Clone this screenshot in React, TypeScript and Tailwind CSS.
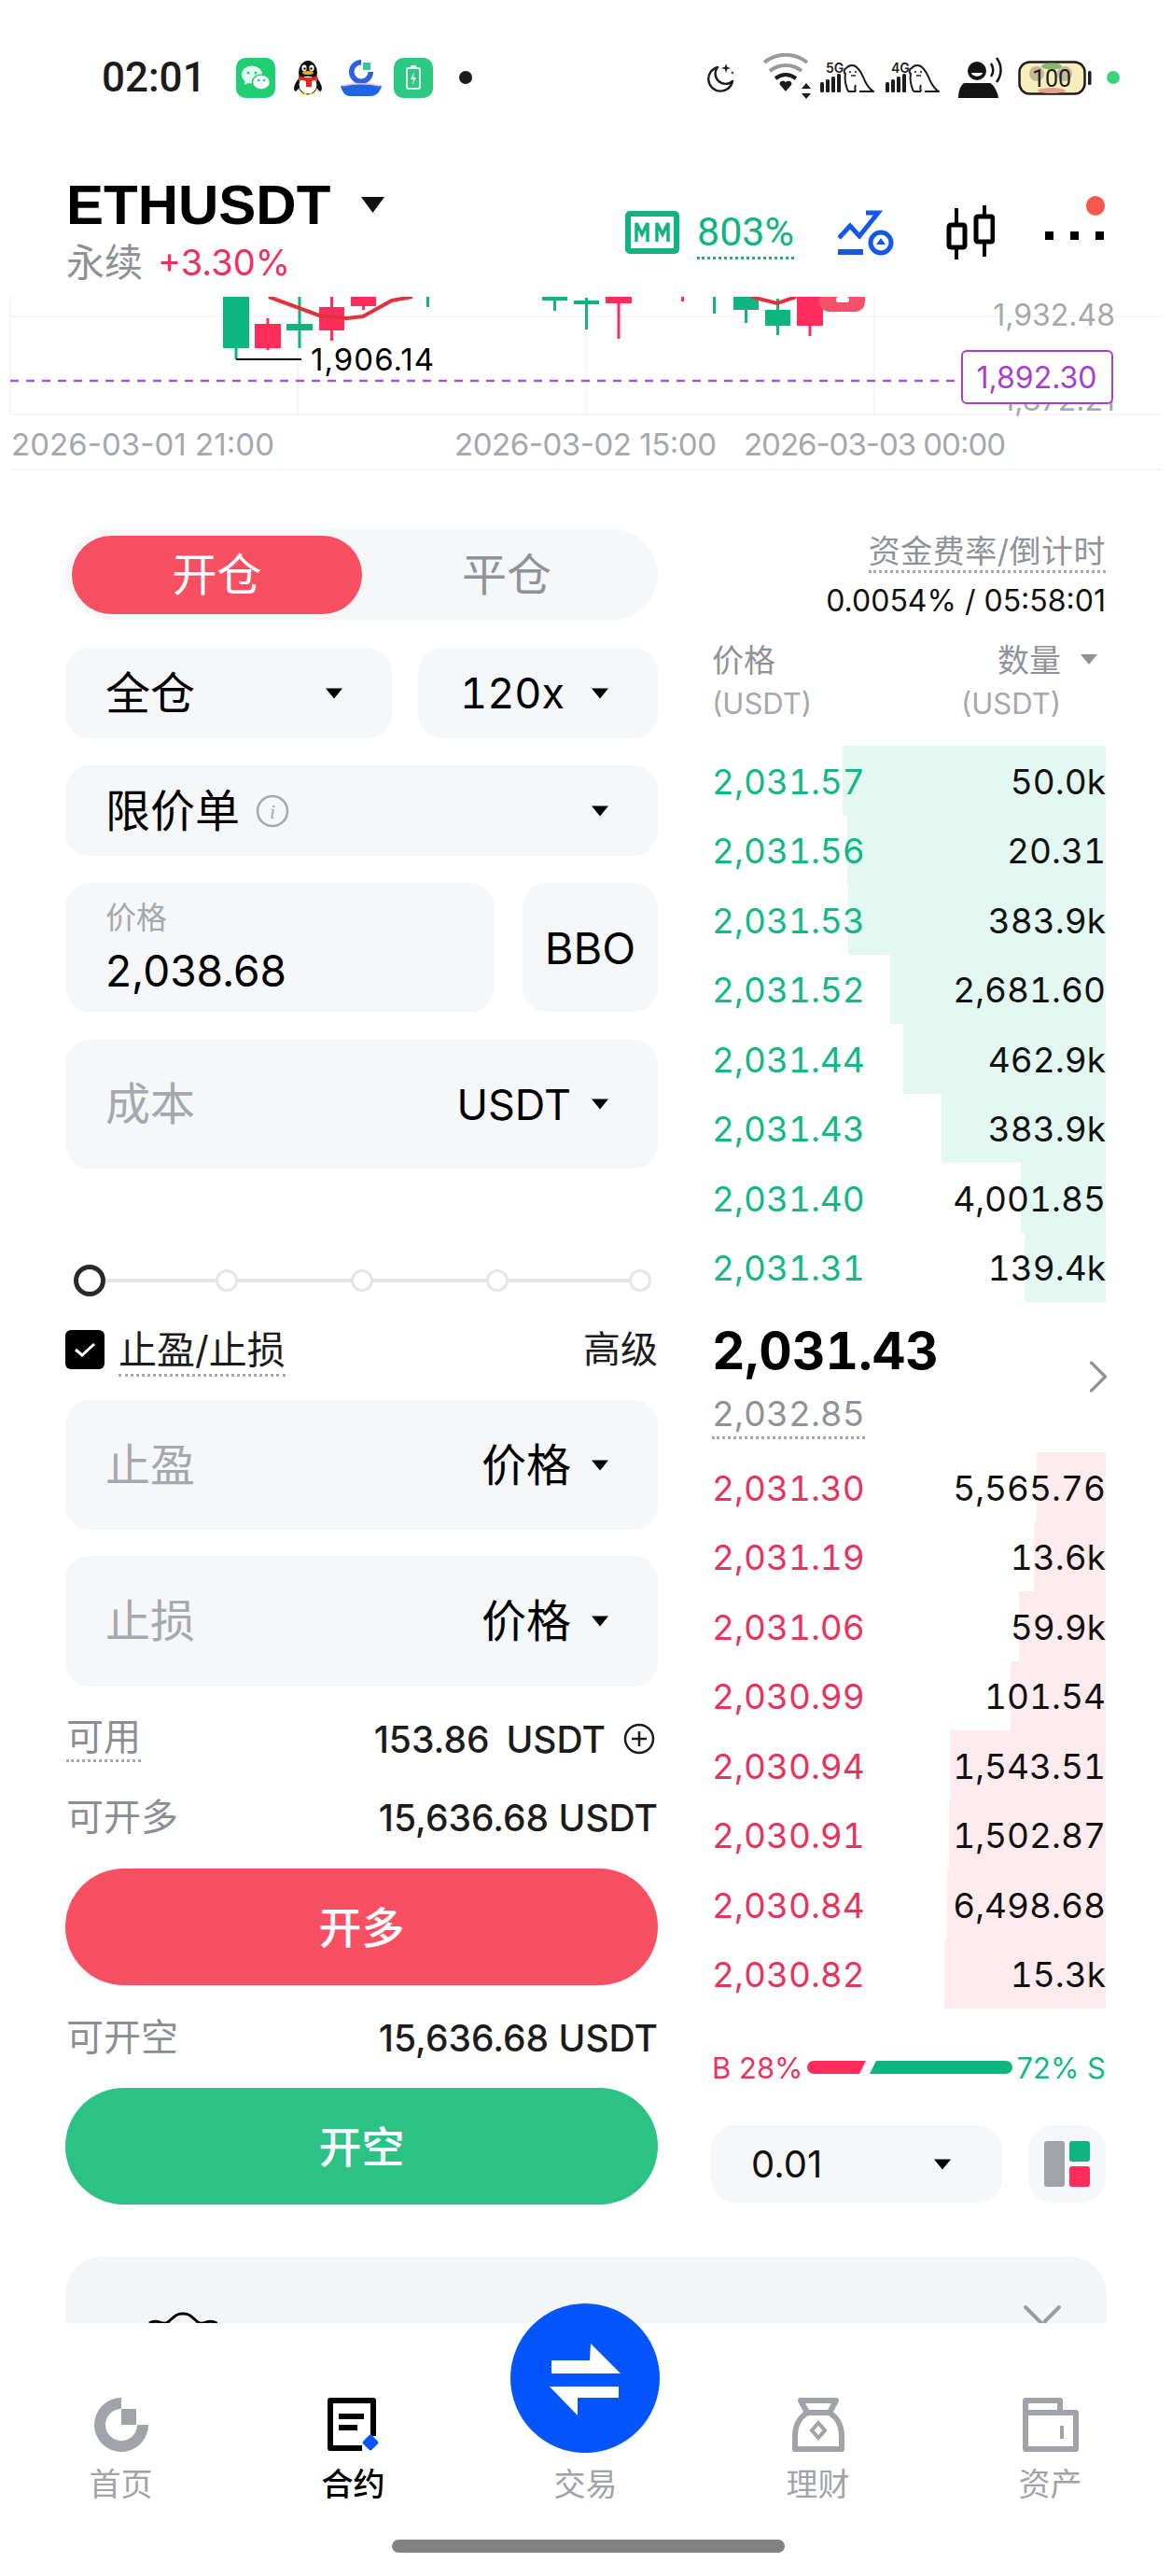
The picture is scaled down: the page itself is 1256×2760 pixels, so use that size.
import React from "react";
import { ChevronRight, ChevronDown } from "lucide-react";

const GREEN = "#0fb57e";
const RED = "#ff2d5b";

const asks = [
  { price: "2,031.57", qty: "50.0k", left: 903 },
  { price: "2,031.56", qty: "20.31", left: 908 },
  { price: "2,031.53", qty: "383.9k", left: 909 },
  { price: "2,031.52", qty: "2,681.60", left: 954 },
  { price: "2,031.44", qty: "462.9k", left: 968 },
  { price: "2,031.43", qty: "383.9k", left: 1009 },
  { price: "2,031.40", qty: "4,001.85", left: 1094 },
  { price: "2,031.31", qty: "139.4k", left: 1098 },
];

const bids = [
  { price: "2,031.30", qty: "5,565.76", left: 1111 },
  { price: "2,031.19", qty: "13.6k", left: 1108 },
  { price: "2,031.06", qty: "59.9k", left: 1092 },
  { price: "2,030.99", qty: "101.54", left: 1083 },
  { price: "2,030.94", qty: "1,543.51", left: 1018 },
  { price: "2,030.91", qty: "1,502.87", left: 1017 },
  { price: "2,030.84", qty: "6,498.68", left: 1015 },
  { price: "2,030.82", qty: "15.3k", left: 1012 },
];

// x, width, body top, body bottom, wick top, wick bottom
const candles: [string, number, number, number, number, number, number][] = [
  [GREEN, 239, 28, 318, 373, 318, 385],
  [RED, 273, 28, 347, 373, 341, 375],
  [GREEN, 307, 28, 347, 354, 318, 373],
  [RED, 342, 27, 329, 354, 318, 365],
  [RED, 376, 27, 318, 328, 318, 332],
  [GREEN, 581, 27, 318, 322, 318, 333],
  [GREEN, 615, 27, 322, 326, 319, 353],
  [RED, 649, 28, 318, 325, 318, 363],
  [GREEN, 786, 27, 318, 332, 318, 346],
  [GREEN, 820, 27, 332, 349, 320, 359],
  [RED, 854, 28, 318, 349, 318, 360],
];

const Caret = ({ className = "" }: { className?: string }) => (
  <svg width="18" height="12" viewBox="0 0 18 12" className={className}>
    <path d="M0 0.5h18L9 11.5z" fill="currentColor" />
  </svg>
);

const WeChat = () => (
  <svg width="42" height="43" viewBox="0 0 42 43">
    <rect width="42" height="43" rx="10" fill="#1fcf72" />
    <ellipse cx="17" cy="18" rx="11" ry="9.5" fill="#e8fbf0" />
    <path d="M10 24l-1 5 6-3z" fill="#e8fbf0" />
    <ellipse cx="27" cy="26" rx="9.5" ry="8" fill="#fff" stroke="#1fcf72" strokeWidth="1.5" />
    <circle cx="13" cy="16" r="1.5" fill="#1fcf72" />
    <circle cx="21" cy="16" r="1.5" fill="#1fcf72" />
    <circle cx="24" cy="24" r="1.3" fill="#1fcf72" />
    <circle cx="30" cy="24" r="1.3" fill="#1fcf72" />
  </svg>
);

const QQ = () => (
  <svg width="32" height="39" viewBox="0 0 32 39">
    <ellipse cx="16" cy="14" rx="10" ry="13" fill="#111" />
    <path d="M6 20C0 28 0 33 3 34l5-5zM26 20c6 8 6 13 3 14l-5-5z" fill="#111" />
    <ellipse cx="16" cy="27" rx="10" ry="10" fill="#fff" stroke="#111" strokeWidth="1" />
    <ellipse cx="12" cy="9" rx="2.6" ry="3.4" fill="#fff" />
    <ellipse cx="20" cy="9" rx="2.6" ry="3.4" fill="#fff" />
    <circle cx="12.5" cy="9.5" r="1.2" fill="#111" />
    <circle cx="19.5" cy="9.5" r="1.2" fill="#111" />
    <ellipse cx="16" cy="14" rx="6" ry="2" fill="#f5a623" />
    <path d="M6 17c6 3 14 3 20 0l1 4-7 2v6h-6v-6l-8-2z" fill="#e5281f" />
    <path d="M8 37c3-2 5-2 7 0zM17 37c3-2 5-2 7 0z" fill="#f5b93a" />
  </svg>
);

const BlueApp = () => (
  <svg width="44" height="41" viewBox="0 0 44 41">
    <path d="M22 1a13 13 0 1 0 13 13h-5.500a7.500 7.500 0 1 1-7.500-7.500z" fill="#2f5fe0" />
    <rect x="24" y="4" width="8" height="8" fill="#36c9a0" />
    <path d="M0 29c14-3 30-3 44 0-2 7-6 11-12 11H10C5 40 2 36 0 29z" fill="#1e66e6" />
    <path d="M2 29c14-3 26-3 40 0" stroke="#f3b6d8" strokeWidth="1.5" fill="none" />
  </svg>
);

const ChargeApp = () => (
  <svg width="42" height="43" viewBox="0 0 42 43">
    <rect width="42" height="43" rx="10" fill="#2dc982" />
    <rect x="14" y="11" width="14" height="22" rx="2" fill="none" stroke="#e9fbf2" strokeWidth="2" />
    <rect x="18" y="8" width="6" height="3" fill="#e9fbf2" />
    <path d="M22 15l-4 8h3l-1 6 4-8h-3z" fill="#e9fbf2" />
  </svg>
);

const Moon = () => (
  <svg width="32" height="32" viewBox="0 0 32 32" fill="none">
    <path d="M13 5a13 13 0 1 0 16 15A11 11 0 0 1 13 5z" stroke="#1c1c1c" strokeWidth="2.4" strokeLinejoin="round" />
    <path d="M22 1l1.2 3.8L27 6l-3.8 1.2L22 11l-1.2-3.8L17 6l3.800-1.200zM29 9l.6 1.400 1.400.6-1.400.6L29 13l-.6-1.400L27 11l1.400-.6z" fill="#1c1c1c" />
  </svg>
);

const Wifi = () => (
  <svg width="53" height="50" viewBox="0 0 53 50" fill="none">
    <path d="M1 10C14-1 34-1 47 10" stroke="#9a9a9a" strokeWidth="4" />
    <path d="M7 19c10-8 24-8 34 0" stroke="#9a9a9a" strokeWidth="4" />
    <path d="M13 27c7-5 15-5 22 0" stroke="#1c1c1c" strokeWidth="4" />
    <path d="M24 41l-6-7c-2-3 3-6 6-3 3-3 8 0 6 3z" fill="#1c1c1c" />
    <path d="M46 32l-5 6h10zM46 49l-5-6h10z" fill="#1c1c1c" />
  </svg>
);

const Dog = ({ label }: { label: string }) => (
  <svg width="58" height="36" viewBox="0 0 58 36" fill="none">
    <text x="6" y="14" fontSize="14" fontWeight="600" fill="#1c1c1c" fontFamily="Inter">{label}</text>
    <rect x="0" y="24" width="4" height="11" rx="1.500" fill="#1c1c1c" />
    <rect x="6" y="21" width="4" height="14" rx="1.500" fill="#1c1c1c" />
    <rect x="12" y="18" width="4" height="17" rx="1.500" fill="#1c1c1c" />
    <rect x="18" y="15" width="4" height="20" rx="1.500" fill="#1c1c1c" />
    <path d="M30 34c-3-7-4-14-3-19-2-1-2-5 1-6 3-4 9-4 12 0 4 4 6 9 8 14 2 4 4 8 9 11H42M30 34h8M38 34c-1-3-1-5 0-7" stroke="#1c1c1c" strokeWidth="2" />
    <circle cx="32" cy="13" r="1.100" fill="#1c1c1c" />
    <circle cx="38" cy="13" r="1.100" fill="#1c1c1c" />
    <path d="M33 17h5" stroke="#1c1c1c" strokeWidth="1.500" />
  </svg>
);

const Person = () => (
  <svg width="48" height="44" viewBox="0 0 48 44">
    <circle cx="20" cy="15" r="10" fill="#141414" />
    <path d="M14 17h12c-1 5-11 5-12 0z" fill="#fff" />
    <path d="M6 28h28c4 2 8 9 9 16H0c0-7 2-13 6-16z" fill="#141414" />
    <path d="M35 7c3 5 3 10 0 14M41 1c6 8 6 18 0 26" stroke="#141414" strokeWidth="2.500" fill="none" />
  </svg>
);

const Battery = () => (
  <svg width="79" height="37" viewBox="0 0 79 37">
    <rect x="1.500" y="1.500" width="70" height="34" rx="11" fill="#f6efbc" stroke="#1c1c1c" strokeWidth="2.500" />
    <circle cx="20" cy="14" r="8" fill="#c7b79a" />
    <circle cx="50" cy="14" r="8" fill="#c7b79a" />
    <ellipse cx="36" cy="6" rx="11" ry="3.500" fill="#86b96b" />
    <ellipse cx="36" cy="32" rx="15" ry="3" fill="#e8a08c" />
    <text x="36" y="28" textAnchor="middle" fontSize="25" fill="#1c1c1c" fontFamily="Roboto">100</text>
    <rect x="75" y="11" width="3.500" height="15" rx="1.500" fill="#1c1c1c" />
  </svg>
);

const StatusBar = () => (
  <div className="h-[166px] flex items-center justify-between pl-[109px] pr-[56px]">
    <div className="flex items-center">
      <span className="font-[family-name:Roboto,sans-serif] font-medium text-[44px] leading-none text-[#1c1c1c] w-[144px]">02:01</span>
      <WeChat />
      <div className="ml-[19px]"><QQ /></div>
      <div className="ml-[19px]"><BlueApp /></div>
      <div className="ml-[13px]"><ChargeApp /></div>
      <div className="ml-[28px] w-[14px] h-[14px] rounded-full bg-[#1c1c1c]" />
    </div>
    <div className="flex items-center">
      <Moon />
      <div className="ml-[30px] -mt-[2px]"><Wifi /></div>
      <div className="ml-[8px] -mt-[2px]"><Dog label="5G" /></div>
      <div className="ml-[12px] -mt-[2px]"><Dog label="4G" /></div>
      <div className="ml-[20px]"><Person /></div>
      <div className="ml-[16px]"><Battery /></div>
      <div className="ml-[16px] w-[14px] h-[14px] rounded-full bg-[#3ed27f]" />
    </div>
  </div>
);

const Header = () => (
  <div className="h-[152px] relative flex justify-between pl-[71px] pr-[73px]">
    <div>
      <div className="flex items-center h-[84px] pt-[24px]">
        <span className="font-[family-name:'Liberation_Sans',sans-serif] font-bold text-[60px] leading-none text-black">ETHUSDT</span>
        <svg width="25" height="17" viewBox="0 0 25 17" className="ml-[33px] -mt-[2px]">
          <path d="M0 0h25L12.500 17z" fill="#111" />
        </svg>
      </div>
      <div className="flex items-center h-[44px] mt-[9px]">
        <span className="text-[41px] leading-none text-[#8d9196]">永续</span>
        <span className="ml-[16px] text-[38px] leading-none text-[#ef2f5e]">+3.30%</span>
      </div>
    </div>
    <div className="flex items-center pt-[44px] h-[122px]">
      <svg width="58" height="46" viewBox="0 0 58 46">
        <rect x="3" y="3" width="52" height="40" rx="2" fill="none" stroke={GREEN} strokeWidth="6" />
        <path d="M12 33V13l6 12 6-12v20M34 33V13l6 12 6-12v20" fill="none" stroke={GREEN} strokeWidth="3.500" />
      </svg>
      <div className="ml-[19px] mt-[6px]">
        <div className="font-[family-name:Roboto,sans-serif] text-[43px] leading-[42px] text-[#0fb57e] border-b-[3px] border-dotted border-[#0fb57e] pb-[6px]">803%</div>
      </div>
      <svg width="60" height="50" viewBox="0 0 60 50" className="ml-[47px]" fill="none">
        <path d="M1 31l12-13 10 11L43 4H30" stroke="#1557e6" strokeWidth="5" />
        <rect x="0" y="43" width="27" height="6" fill="#1557e6" />
        <circle cx="46" cy="36" r="11" stroke="#1557e6" strokeWidth="5" />
        <path d="M46 31l5 7H41z" fill="#1557e6" />
      </svg>
      <svg width="52" height="58" viewBox="0 0 52 58" className="ml-[56px]" fill="none" stroke="#000" strokeWidth="4">
        <path d="M11 3v55M41 0v55" />
        <rect x="3" y="21" width="17" height="24" rx="2" fill="#fff" strokeWidth="5" />
        <rect x="32" y="12" width="18" height="27" rx="2" fill="#fff" strokeWidth="5" />
      </svg>
      <div className="ml-[54px] mt-[6px] flex gap-[18px]">
        <div className="w-[9px] h-[9px] bg-black" />
        <div className="w-[9px] h-[9px] bg-black" />
        <div className="w-[9px] h-[9px] bg-black" />
      </div>
    </div>
    <div className="absolute top-[44px] right-[72px] w-[20px] h-[21px] rounded-full bg-[#f6594b]" />
  </div>
);

const Chart = () => (
  <svg width="1256" height="190" viewBox="0 318 1256 190" className="block">
    <g stroke="#f3f4f5" strokeWidth="1.500" fill="none">
      <path d="M11 339H1246M11 444H1246M11 503H1246M11 318V444M319 318V444M628 318V444M937 318V444" />
    </g>
    {candles.map(([c, x, w, bt, bb, wt, wb], i) => (
      <g key={i} fill={c}>
        <rect x={x + w / 2 - 1.5} y={wt} width="3" height={wb - wt} />
        <rect x={x} y={bt} width={w} height={bb - bt} />
      </g>
    ))}
    <rect x="457" y="318" width="3" height="11" fill={GREEN} />
    <rect x="730" y="318" width="3" height="5" fill={RED} />
    <rect x="764" y="318" width="3" height="18" fill={GREEN} />
    <path d="M288 318l54 20 30 3 17-2 31-17 22-4M805 318l28 7 20-7" stroke="#e0333f" strokeWidth="4" fill="none" />
    <path d="M878 318h49v6a10 10 0 0 1-10 10h-29a10 10 0 0 1-10-10z" fill="#f4516a" />
    <rect x="896" y="318" width="14" height="6" rx="3" fill="#fff" />
    <path d="M253 385h70" stroke="#000" strokeWidth="2" />
    <text x="333" y="397" fontSize="33" fill="#000" fontFamily="Inter" textLength="132">1,906.14</text>
    <text x="1195" y="349" textAnchor="end" fontSize="32" fill="#a5a8ac" fontFamily="Inter">1,932.48</text>
    <text x="1195" y="440" textAnchor="end" fontSize="32" fill="#a5a8ac" fontFamily="Inter">1,872.21</text>
    <path d="M11 408H1030" stroke="#a855d0" strokeWidth="2.500" strokeDasharray="9 8" />
    <rect x="1031" y="376" width="161" height="56" rx="5" fill="#fff" stroke="#a63fcb" strokeWidth="2" />
    <text x="1111" y="416" textAnchor="middle" fontSize="32" fill="#a63fcb" fontFamily="Inter">1,892.30</text>
    <g fontSize="33" fill="#a5a8ac" fontFamily="Inter">
      <text x="12" y="488" textLength="282">2026-03-01 21:00</text>
      <text x="487" y="488" textLength="281">2026-03-02 15:00</text>
      <text x="797" y="488" textLength="281">2026-03-03 00:00</text>
    </g>
  </svg>
);

const Field = ({ className = "", children }: { className?: string; children: React.ReactNode }) => (
  <div className={`bg-[#f5f7f8] rounded-[26px] flex items-center justify-between ${className}`}>{children}</div>
);

const TradeForm = () => (
  <div className="w-[635px] shrink-0">
    <div className="h-[97px] rounded-full bg-[#f5f7f8] p-[7px] flex items-center">
      <div className="w-[311px] h-[84px] rounded-full bg-[#f84f63] flex items-center justify-center text-white text-[48px] leading-none">开仓</div>
      <div className="flex-1 text-center text-[#8f9398] text-[48px] leading-none">平仓</div>
    </div>

    <div className="mt-[30px] flex gap-[28px]">
      <Field className="w-[350px] h-[97px] pl-[43px] pr-[53px]">
        <span className="text-[48px] leading-none text-black">全仓</span>
        <Caret className="text-black" />
      </Field>
      <Field className="flex-1 h-[97px] pl-[45px] pr-[53px]">
        <span className="text-[45px] leading-none tabular-nums text-black">120x</span>
        <Caret className="text-black" />
      </Field>
    </div>

    <Field className="mt-[29px] h-[97px] pl-[43px] pr-[53px]">
      <div className="flex items-center">
        <span className="text-[48px] leading-none text-black">限价单</span>
        <svg width="36" height="36" viewBox="0 0 36 36" className="ml-[17px]" fill="none">
          <circle cx="18" cy="18" r="16" stroke="#a5a8ac" strokeWidth="2.500" />
          <text x="18" y="26" textAnchor="middle" fontSize="22" fontStyle="italic" fill="#a5a8ac" fontFamily="Liberation Serif">i</text>
        </svg>
      </div>
      <Caret className="text-black" />
    </Field>

    <div className="mt-[29px] flex gap-[30px]">
      <div className="w-[460px] h-[138px] bg-[#f5f7f8] rounded-[26px] pl-[43px] pt-[18px]">
        <div className="text-[33px] leading-[38px] text-[#a5a8ac]">价格</div>
        <div className="text-[46px] leading-[50px] mt-[13px] text-black">2,038.68</div>
      </div>
      <div className="flex-1 h-[138px] bg-[#f5f7f8] rounded-[26px] flex items-center justify-center text-[47px] leading-none text-black">BBO</div>
    </div>

    <Field className="mt-[30px] h-[138px] pl-[43px] pr-[53px]">
      <span className="text-[48px] leading-none text-[#a5a8ac]">成本</span>
      <div className="flex items-center gap-[22px]">
        <span className="text-[45px] leading-none text-black">USDT</span>
        <Caret className="text-black" />
      </div>
    </Field>

    {/* leverage slider */}
    <div className="mt-[103px] h-[34px] relative flex items-center pl-[9px]">
      <div className="absolute left-[40px] right-[20px] h-[4px] bg-[#e4e6e8]" />
      <div className="relative w-[34px] h-[34px] rounded-full border-[5px] border-[#2a2a2a] bg-white" />
      <div className="relative ml-[118px] w-[24px] h-[24px] rounded-full border-[3px] border-[#e4e6e8] bg-white" />
      <div className="relative ml-[121px] w-[24px] h-[24px] rounded-full border-[3px] border-[#e4e6e8] bg-white" />
      <div className="relative ml-[121px] w-[24px] h-[24px] rounded-full border-[3px] border-[#e4e6e8] bg-white" />
      <div className="relative ml-[129px] w-[24px] h-[24px] rounded-full border-[3px] border-[#e4e6e8] bg-white" />
    </div>

    <div className="mt-[36px] h-[42px] flex items-center justify-between">
      <div className="flex items-center">
        <div className="w-[42px] h-[42px] rounded-[6px] bg-black flex items-center justify-center">
          <svg width="24" height="18" viewBox="0 0 24 18" fill="none">
            <path d="M2 9l7 6L22 3" stroke="#fff" strokeWidth="3" />
          </svg>
        </div>
        <span className="ml-[15px] mt-[6px] text-[41px] leading-[44px] pb-[4px] text-[#1c1c1c] border-b-[3px] border-dotted border-[#a5a8ac]">止盈/止损</span>
      </div>
      <span className="text-[40px] leading-none text-[#1c1c1c]">高级</span>
    </div>

    <Field className="mt-[33px] h-[139px] pl-[43px] pr-[53px]">
      <span className="text-[48px] leading-none text-[#a5a8ac]">止盈</span>
      <div className="flex items-center gap-[22px]">
        <span className="text-[48px] leading-none text-black">价格</span>
        <Caret className="text-black" />
      </div>
    </Field>
    <Field className="mt-[28px] h-[140px] pl-[43px] pr-[53px]">
      <span className="text-[48px] leading-none text-[#a5a8ac]">止损</span>
      <div className="flex items-center gap-[22px]">
        <span className="text-[48px] leading-none text-black">价格</span>
        <Caret className="text-black" />
      </div>
    </Field>

    <div className="mt-[36px] h-[40px] flex items-center justify-between">
      <span className="text-[40px] leading-[44px] pb-[2px] text-[#8b8f94] border-b-[3px] border-dotted border-[#a5a8ac] ml-[1px]">可用</span>
      <div className="flex items-center">
        <span className="text-[39px] leading-none font-medium text-[#1c1c1c]">153.86</span>
        <span className="ml-[18px] text-[39px] leading-none font-medium text-[#1c1c1c]">USDT</span>
        <svg width="34" height="34" viewBox="0 0 34 34" className="ml-[19px] mr-[3px]" fill="none" stroke="#1c1c1c" strokeWidth="2.500">
          <circle cx="17" cy="17" r="15" />
          <path d="M9 17h16M17 9v16" />
        </svg>
      </div>
    </div>

    <div className="mt-[44px] h-[40px] flex items-center justify-between">
      <span className="text-[40px] leading-none text-[#8b8f94] ml-[1px]">可开多</span>
      <span className="text-[39px] leading-none font-medium text-[#1c1c1c]">15,636.68 USDT</span>
    </div>
    <div className="mt-[35px] h-[125px] rounded-full bg-[#f84f63] flex items-center justify-center text-white text-[46px] font-medium leading-none">开多</div>

    <div className="mt-[36px] h-[40px] flex items-center justify-between">
      <span className="text-[40px] leading-none text-[#8b8f94] ml-[1px]">可开空</span>
      <span className="text-[39px] leading-none font-medium text-[#1c1c1c]">15,636.68 USDT</span>
    </div>
    <div className="mt-[34px] h-[125px] rounded-full bg-[#2dc285] flex items-center justify-center text-white text-[46px] font-medium leading-none">开空</div>
  </div>
);

const DepthRow = ({ price, qty, left, side }: { price: string; qty: string; left: number; side: "ask" | "bid" }) => (
  <div className="relative h-[74.5px] flex items-center justify-between pl-[1px]">
    <div
      className={`absolute top-0 bottom-0 right-0 ${side === "ask" ? "bg-[#e2f8f0]" : "bg-[#feebee]"}`}
      style={{ width: 1185 - left }}
    />
    <span className={`relative text-[37px] leading-none tabular-nums pt-[2px] ${side === "ask" ? "text-[#12b886]" : "text-[#e8345d]"}`}>{price}</span>
    <span className="relative text-[37px] leading-none tabular-nums pt-[2px] text-[#111]">{qty}</span>
  </div>
);

const OrderBook = () => (
  <div className="w-[423px] shrink-0">
    <div className="flex flex-col items-end pt-[4px]">
      <span className="text-[34px] leading-[40px] tracking-[0.5px] text-[#8f9398] border-b-[3px] border-dotted border-[#a5a8ac]">资金费率/倒计时</span>
      <span className="text-[32px] leading-[36px] mt-[12px] text-[#111]">0.0054% / 05:58:01</span>
    </div>
    <div className="mt-[26px] h-[93px] flex justify-between pl-[1px] pr-[9px]">
      <div>
        <div className="text-[34px] leading-[40px] text-[#8f9398]">价格</div>
        <div className="text-[31px] leading-[34px] mt-[9px] text-[#a5a8ac]">(USDT)</div>
      </div>
      <div className="flex">
        <div className="text-right">
          <div className="text-[34px] leading-[40px] text-[#8f9398]">数量</div>
          <div className="text-[31px] leading-[34px] mt-[9px] text-[#a5a8ac]">(USDT)</div>
        </div>
        <svg width="18" height="11" viewBox="0 0 18 11" className="ml-[21px] mt-[13px]">
          <path d="M0 0h18L9 11z" fill="#8f9398" />
        </svg>
      </div>
    </div>
    <div className="mt-[18px]">
      {asks.map((r) => (
        <DepthRow key={r.price} {...r} side="ask" />
      ))}
    </div>
    <div className="h-[161px] flex justify-between items-start pl-[1px] pt-[22px]">
      <div className="flex flex-col items-start">
        <span className="text-[55px] leading-[60px] font-bold tabular-nums text-black">2,031.43</span>
        <span className="text-[37px] leading-[42px] mt-[17px] pb-[3px] tabular-nums text-[#8f9398] border-b-[3px] border-dotted border-[#a5a8ac]">2,032.85</span>
      </div>
      <ChevronRight size={60} strokeWidth={1.3} className="text-[#8f9398] mt-[28px] -mr-[22px]" />
    </div>
    <div>
      {bids.map((r) => (
        <DepthRow key={r.price} {...r} side="bid" />
      ))}
    </div>
    <div className="mt-[50px] h-[26px] flex items-center justify-between pl-[1px]">
      <span className="text-[31px] leading-none text-[#e8345d]">B 28%</span>
      <svg width="220" height="14" viewBox="0 0 220 14">
        <path d="M7 0h56l-7 14H7a7 7 0 0 1 0-14z" fill={RED} />
        <path d="M74 0h139a7 7 0 0 1 0 14H67z" fill={GREEN} />
      </svg>
      <span className="text-[31px] leading-none text-[#12b886]">72% S</span>
    </div>
    <div className="mt-[49px] flex justify-between">
      <div className="w-[312px] h-[83px] rounded-[26px] bg-[#f5f7f8] flex items-center justify-between pl-[43px] pr-[55px]">
        <span className="text-[40px] leading-none text-[#111]">0.01</span>
        <Caret className="text-black" />
      </div>
      <div className="w-[83px] h-[83px] rounded-[26px] bg-[#f5f7f8] flex items-center justify-center gap-[5px]">
        <div className="w-[22px] h-[49px] rounded-[3px] bg-[#a0a3a7]" />
        <div className="flex flex-col gap-[5px]">
          <div className="w-[22px] h-[22px] rounded-[3px] bg-[#0fb57e]" />
          <div className="w-[22px] h-[22px] rounded-[3px] bg-[#ff2d5b]" />
        </div>
      </div>
    </div>
  </div>
);

const NavItem = ({ label, active, icon }: { label: string; active?: boolean; icon: React.ReactNode }) => (
  <div className="w-[249px] flex flex-col items-center">
    <div className="h-[60px] flex items-end">{icon}</div>
    <span className={`mt-[17px] text-[34px] leading-[36px] ${active ? "text-black font-medium" : "text-[#a0a3a7]"}`}>{label}</span>
  </div>
);

const BottomNav = () => (
  <div className="absolute left-0 right-0 bottom-0 h-[271px] bg-white">
    <div className="absolute left-[547px] -top-[21px] w-[160px] h-[160px] rounded-full bg-[#0455fb]">
      <svg width="160" height="160" viewBox="0 0 160 160">
        <path d="M44 61h41l1-18 32 32H44zM42 89h74v12H72v19z" fill="#fff" />
      </svg>
    </div>
    <div className="flex pl-[5px] pt-[78px]">
      <NavItem
        label="首页"
        icon={
          <svg width="58" height="59" viewBox="0 0 58 59">
            <path d="M29 1a29 29 0 1 0 29 29H46A17 17 0 1 1 29 13z" fill="#a0a3a7" />
            <rect x="29" y="13" width="16" height="17" fill="#a0a3a7" />
          </svg>
        }
      />
      <NavItem
        label="合约"
        active
        icon={
          <svg width="56" height="58" viewBox="0 0 56 58" fill="none">
            <path d="M37 54H3V3h46v38" stroke="#000" strokeWidth="6" strokeLinejoin="round" />
            <path d="M12 17h27v6H12zM12 29h20v6H12z" fill="#000" />
            <rect x="39.500" y="41.500" width="13" height="13" rx="2" transform="rotate(45 46 48)" fill="#0455fb" />
          </svg>
        }
      />
      <NavItem label="交易" icon={<div className="w-[58px]" />} />
      <NavItem
        label="理财"
        icon={
          <svg width="56" height="58" viewBox="0 0 56 58" fill="none" stroke="#a0a3a7" strokeWidth="6">
            <path d="M9 3h38l-7 13c8 5 13 14 13 24v15H3V40c0-10 5-19 13-24z" strokeLinejoin="round" />
            <path d="M28 27l7 8-7 8-7-8z" strokeWidth="4" />
            <path d="M16 16h24" />
          </svg>
        }
      />
      <NavItem
        label="资产"
        icon={
          <svg width="60" height="58" viewBox="0 0 60 58" fill="none" stroke="#a0a3a7" strokeWidth="6">
            <path d="M3 55V3h37v13M3 16h54v39H3z" strokeLinejoin="round" />
            <path d="M42 30v14" strokeWidth="4" />
          </svg>
        }
      />
    </div>
    <div className="absolute left-[420px] top-[232px] w-[421px] h-[14px] rounded-full bg-[#828282]" />
  </div>
);

export default function App() {
  return (
    <div className="relative w-[1256px] h-[2760px] overflow-hidden bg-white text-black font-[family-name:Inter,'Noto_Sans_CJK_SC',sans-serif]">
      <StatusBar />
      <Header />
      <Chart />
      <div className="mt-[59px] flex gap-[57px] pl-[70px]">
        <TradeForm />
        <OrderBook />
      </div>
      <div className="mt-[56px] mx-[70px] w-[1116px] h-[300px] rounded-t-[40px] bg-[#f3f5f6] flex justify-between pl-[89px] pr-[33px] pt-[53px]">
        <svg width="74" height="30" viewBox="0 0 74 30" fill="none" stroke="#000" strokeWidth="3" className="mt-[6px]">
          <path d="M1 12c10-6 14 4 20-1C26 7 30 1 37 2c7-1 11 5 16 9 6 5 10-5 20 1v18" />
          <path d="M1 12v18" />
        </svg>
        <ChevronDown size={72} strokeWidth={1.3} className="text-[#9a9ea3] -mt-[26px]" />
      </div>
      <BottomNav />
    </div>
  );
}
